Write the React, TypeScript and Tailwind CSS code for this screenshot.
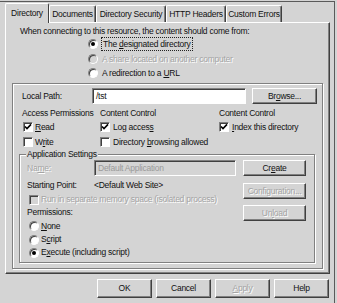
import React from 'react';

// classic win2k property sheet: IIS "Directory" tab
const font = "font-['Liberation_Sans',Arial,sans-serif] text-[8.5px] tracking-[-0.25px]";
const dim = 'text-[#a4a4a4] [text-shadow:1px_1px_0_#fff]';

const Btn: React.FC<{ w: string; h?: string; disabled?: boolean; children: React.ReactNode }> = ({ w, h = 'h-[16px]', disabled, children }) => (
  <div
    className={`${w} ${h} flex items-center justify-center border border-t-white border-l-white border-r-[#404040] border-b-[#404040] shadow-[inset_-1px_-1px_0_#808080] ${
      disabled ? dim : 'text-[#111]'
    }`}
  >
    {children}
  </div>
);

const Check: React.FC<{ checked?: boolean; disabled?: boolean }> = ({ checked, disabled }) => (
  <div
    className={`w-[10px] h-[10px] shrink-0 border border-t-[#808080] border-l-[#808080] border-r-white border-b-white shadow-[inset_1px_1px_0_#404040] ${
      disabled ? 'bg-[#d4d4d4]' : 'bg-white'
    }`}
  >
    {checked && (
      <svg viewBox="0 0 8 8" className="w-[8px] h-[8px]">
        <path d="M1 3.5 L3 5.6 L7 1.4" fill="none" stroke="#000" strokeWidth={1.6} />
      </svg>
    )}
  </div>
);

const Radio: React.FC<{ checked?: boolean; disabled?: boolean }> = ({ checked, disabled }) => (
  <div
    className={`w-[10px] h-[10px] shrink-0 rounded-full flex items-center justify-center border border-t-[#808080] border-l-[#808080] border-r-white border-b-white shadow-[inset_1px_1px_0_#404040] ${
      disabled ? 'bg-[#d4d4d4]' : 'bg-white'
    }`}
  >
    {checked && <div className="w-[4px] h-[4px] rounded-full bg-black" />}
  </div>
);

const tabs = [
  { label: 'Directory', w: 'w-[44px]' },
  { label: 'Documents', w: 'w-[47px]' },
  { label: 'Directory Security', w: 'w-[70px]' },
  { label: 'HTTP Headers', w: 'w-[60px]' },
  { label: 'Custom Errors', w: 'w-[56px]' },
];

export default function App() {
  return (
    <div className={`w-[337px] h-[303px] bg-[#d4d4d4] overflow-hidden text-[#111] ${font}`}>
      <div className="mt-px w-[335px] h-[302px] border-t border-r border-[#5a5a5a]">
        {/* Tabs */}
        <div className="ml-[5px] mt-px h-[19px] flex items-end">
          {tabs.map((t, i) =>
            i === 0 ? (
              <div
                key={t.label}
                className={`${t.w} h-[20px] -mb-px relative z-10 bg-[#d4d4d4] flex items-center justify-center border-t border-l border-r border-t-white border-l-white border-r-[#404040] rounded-t-[2px] whitespace-nowrap`}
              >
                {t.label}
              </div>
            ) : (
              <div
                key={t.label}
                className={`${t.w} h-[17px] flex items-center justify-center border-t border-l border-r border-t-white border-l-white border-r-[#404040] shadow-[inset_-1px_0_0_#808080] rounded-t-[2px] whitespace-nowrap`}
              >
                {t.label}
              </div>
            )
          )}
        </div>

        {/* Panel */}
        <div className="ml-[5px] w-[325px] h-[252px] border border-t-white border-l-white border-r-[#404040] border-b-[#404040] shadow-[inset_-1px_-1px_0_#808080]">
          <div className="pl-[14px] pt-[2px] h-[14px] leading-[12px] whitespace-nowrap">
            When connecting to this resource, the content should come from:
          </div>
          <div className="pl-[82px] h-[14px] flex items-center gap-[3px] whitespace-nowrap">
            <Radio checked />
            <span className="border border-dotted border-[#222] px-[1px] leading-[12px]">
              The <u>d</u>esignated directory
            </span>
          </div>
          <div className={`mt-px pl-[82px] h-[14px] flex items-center gap-[4px] whitespace-nowrap`}>
            <Radio disabled />
            <span className={dim}>A share located on another computer</span>
          </div>
          <div className="pl-[82px] h-[14px] flex items-center gap-[4px] whitespace-nowrap">
            <Radio />
            <span>
              A redirection to a <u>U</u>RL
            </span>
          </div>

          {/* Outer group */}
          <div className="mt-[3px] ml-[6px] w-[311px] h-[186px] border border-[#808080] shadow-[1px_1px_0_#fff,inset_1px_1px_0_#fff]">
            <div className="mt-[4px] pl-[9px] h-[16px] flex items-center">
              <span className="w-[70px]">Local Path:</span>
              <div className="w-[154px] h-[16px] bg-white flex items-center pl-[3px] border border-t-[#808080] border-l-[#808080] border-r-white border-b-white shadow-[inset_1px_1px_0_#404040]">
                /tst
              </div>
              <div className="ml-[6px]">
                <Btn w="w-[65px]">
                  Br<u>o</u>wse...
                </Btn>
              </div>
            </div>

            <div className="mt-[2px] pl-[9px] h-[14px] flex items-center whitespace-nowrap">
              <span className="w-[78px]">Access Permissions</span>
              <span className="w-[119px]">Content Control</span>
              <span>Content Control</span>
            </div>
            <div className="pl-[9px] h-[14px] flex items-center whitespace-nowrap">
              <div className="w-[78px] flex items-center gap-[2px] pl-px">
                <Check checked />
                <span>
                  <u>R</u>ead
                </span>
              </div>
              <div className="w-[119px] flex items-center gap-[3px]">
                <Check checked />
                <span>
                  Log acces<u>s</u>
                </span>
              </div>
              <div className="flex items-center gap-[3px]">
                <Check checked />
                <span>
                  <u>I</u>ndex this directory
                </span>
              </div>
            </div>
            <div className="mt-px pl-[9px] h-[14px] flex items-center whitespace-nowrap">
              <div className="w-[78px] flex items-center gap-[2px] pl-px">
                <Check />
                <span>
                  W<u>r</u>ite
                </span>
              </div>
              <div className="flex items-center gap-[3px]">
                <Check />
                <span>
                  Directory <u>b</u>rowsing allowed
                </span>
              </div>
            </div>

            {/* Application settings */}
            <div className="relative mt-[5px] ml-[6px] w-[296px] h-[109px] border border-[#808080] shadow-[1px_1px_0_#fff,inset_1px_1px_0_#fff]">
              <span className="absolute -top-[7px] left-[6px] px-px h-[12px] leading-[12px] bg-[#d4d4d4] whitespace-nowrap">
                Application Settings
              </span>
              <div className="flex">
                <div className="w-[220px] pl-[7px]">
                  <div className="mt-[5px] h-[16px] flex items-center whitespace-nowrap">
                    <span className={`w-[67px] ${dim}`}>
                      Na<u>m</u>e:
                    </span>
                    <div className="w-[142px] h-[16px] bg-[#d4d4d4] flex items-center pl-[3px] text-[#9a9a9a] border border-t-[#808080] border-l-[#808080] border-r-white border-b-white shadow-[inset_1px_1px_0_#404040]">
                      Default Application
                    </div>
                  </div>
                  <div className="mt-[2px] h-[14px] flex items-center whitespace-nowrap">
                    <span className="w-[67px]">Starting Point:</span>
                    <span>&lt;Default Web Site&gt;</span>
                  </div>
                  <div className="mt-px h-[13px] pl-[2px] flex items-center gap-[2px] whitespace-nowrap">
                    <Check disabled />
                    <span className={dim}>Run in separate memory space (isolated process)</span>
                  </div>
                  <div className="h-[13px] flex items-center">Permissions:</div>
                  <div className="h-[14px] pl-[2px] flex items-center gap-[2px]">
                    <Radio />
                    <span>
                      <u>N</u>one
                    </span>
                  </div>
                  <div className="h-[13px] pl-[2px] flex items-center gap-[2px]">
                    <Radio />
                    <span>
                      S<u>c</u>ript
                    </span>
                  </div>
                  <div className="h-[13px] pl-[2px] flex items-center gap-[2px] whitespace-nowrap">
                    <Radio checked />
                    <span>
                      E<u>x</u>ecute (including script)
                    </span>
                  </div>
                </div>
                <div className="ml-[3px] flex flex-col">
                  <div className="mt-[5px]">
                    <Btn w="w-[63px]">
                      Cr<u>e</u>ate
                    </Btn>
                  </div>
                  <div className="mt-[7px]">
                    <Btn w="w-[63px]" disabled>
                      Confi<u>g</u>uration...
                    </Btn>
                  </div>
                  <div className="mt-[6px]">
                    <Btn w="w-[63px]" disabled>
                      Un<u>l</u>oad
                    </Btn>
                  </div>
                </div>
              </div>
            </div>
          </div>
        </div>

        {/* Dialog buttons */}
        <div className="mt-[5px] ml-[97px] flex gap-[4px]">
          <Btn w="w-[55px]" h="h-[19px]">OK</Btn>
          <Btn w="w-[55px]" h="h-[19px]">Cancel</Btn>
          <Btn w="w-[55px]" h="h-[19px]" disabled>
            <u>A</u>pply
          </Btn>
          <Btn w="w-[55px]" h="h-[19px]">Help</Btn>
        </div>
      </div>
    </div>
  );
}
